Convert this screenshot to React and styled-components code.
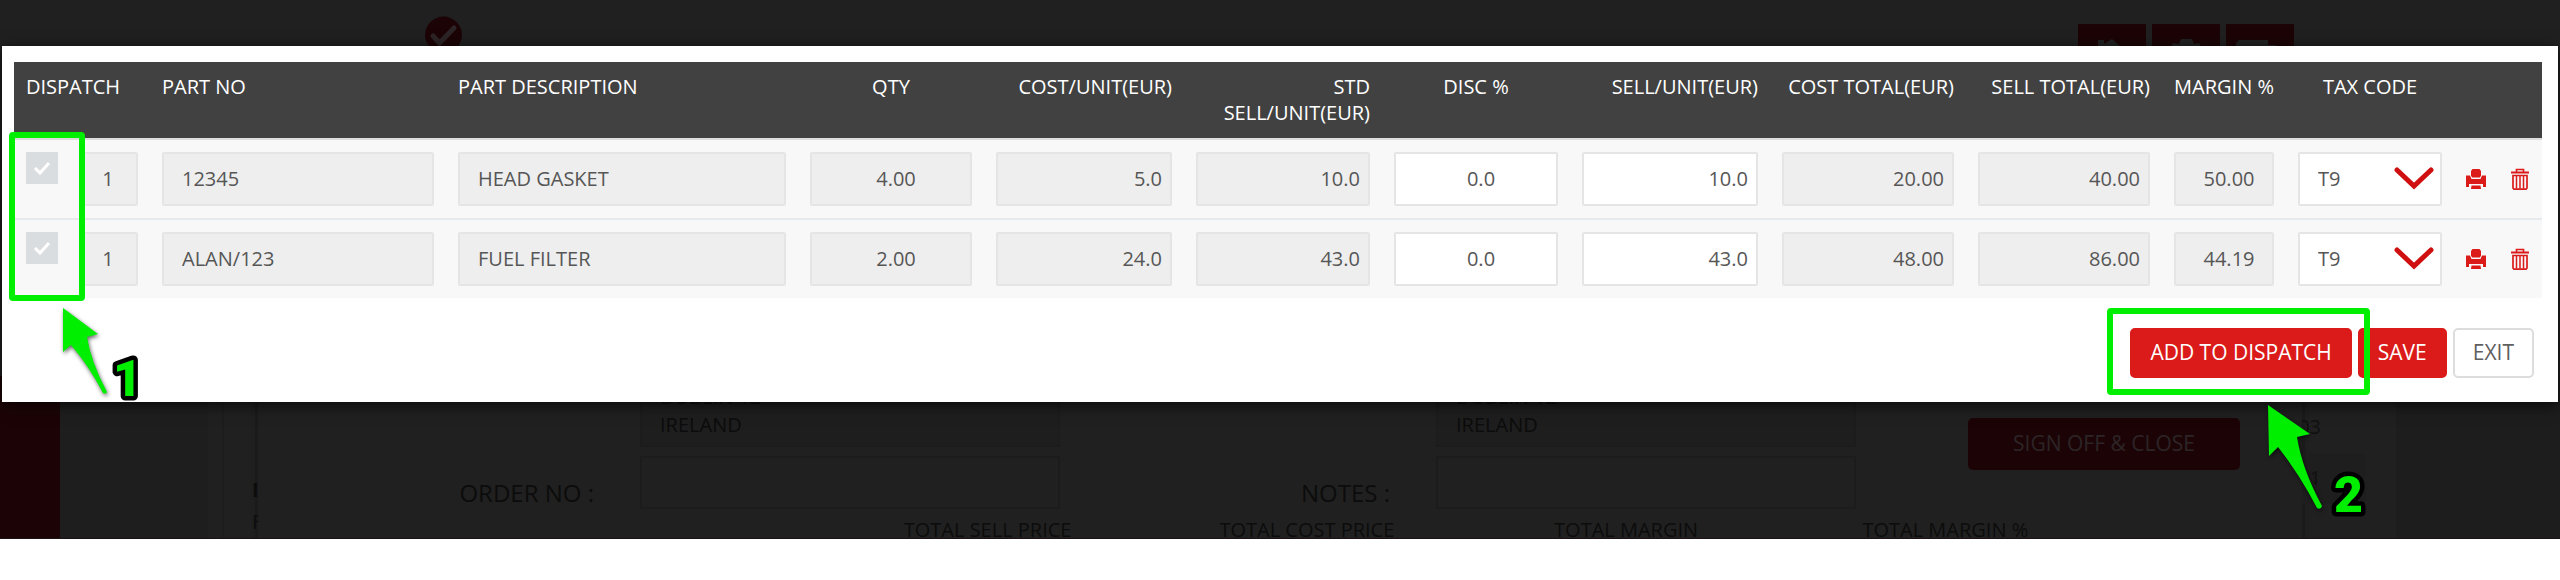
import React from "react";
import styled, { createGlobalStyle } from "styled-components";

const GlobalStyle = createGlobalStyle`
  *, *::before, *::after { box-sizing: border-box; }
  body {
    margin: 0;
    background: #fff;
    color: #565656;
    font-family: "Open Sans", "Noto Sans", sans-serif;
    font-size: 20px;
  }
  input, select, button { font: inherit; color: inherit; margin: 0; }
`;

/* ---------- page behind the dialog ---------- */

const Stage = styled.div`
  display: grid;
  grid-template-columns: minmax(0, 1fr);
  align-items: start;
`;

const Backdrop = styled.div`
  grid-area: 1 / 1;
  background: #202020;
  color: #0c0c0c;
  border-bottom: 1px solid #1c1214;
  overflow: hidden;
`;

const Masthead = styled.header`
  display: flex;
  justify-content: space-between;
  align-items: flex-start;
  min-height: 376px;
  padding: 16px 266px 0 425px;
`;

const Shortcuts = styled.nav`
  display: flex;
  gap: 6px;
  padding-top: 8px;
`;

const Shortcut = styled.a`
  display: flex;
  justify-content: center;
  width: 68px;
  height: 68px;
  padding-top: 14px;
  background: #1c0406;
`;

const PageBody = styled.div`
  display: grid;
  grid-template-columns: 60px 148px 14px 36px minmax(0, 1fr) 64px 30px 164px;
`;

const Strip = styled.div`
  background: ${(p) => p.$tone};
`;

const LeftCard = styled.div`
  display: flex;
  flex-direction: column;
  align-items: flex-end;
  padding-top: 98px;
  overflow: hidden;
  border-left: 2px solid #1d1d1d;
  box-shadow: inset -4px 0 4px -2px #181818;
`;

const Fragment = styled.span`
  width: 6px;
  overflow: hidden;
  line-height: 32px;
  font-weight: ${(p) => (p.$bold ? 700 : 400)};
`;

const RightCard = styled.div`
  color: #101010;
  overflow: hidden;
  box-shadow: inset 4px 0 4px -2px #181818;
`;

const AmountRow = styled.div`
  height: 51px;
  padding-top: 11px;
  background: ${(p) => (p.$striped ? "#1e1e1e" : "transparent")};

  &:first-child { margin-top: 26px; }
`;

const Amount = styled.div`
  width: 24px;
  margin-left: -5px;
  text-align: right;
`;

const Sheet = styled.main`
  min-width: 0;
`;

const Form = styled.div`
  display: grid;
  grid-template-columns: 382fr 420fr 376fr 420fr 446fr;
  grid-template-rows: 71px 53px;
  row-gap: 9px;
`;

const AddressBox = styled.address`
  grid-column: ${(p) => p.$column};
  padding: 7px 18px 0;
  border: 2px solid #1c1c1c;
  border-top: 0;
  background: #1e1e1e;
  font-style: normal;
  line-height: 28px;
`;

const FieldLabel = styled.label`
  grid-column: ${(p) => p.$column};
  grid-row: 2;
  align-self: end;
  padding-right: 46px;
  text-align: right;
  font-size: 24px;
  line-height: 32px;
`;

const DimInput = styled.input`
  grid-column: ${(p) => p.$column};
  grid-row: 2;
  width: 100%;
  border: 2px solid #1c1c1c;
  background: transparent;
`;

const SignOff = styled.button`
  grid-column: 5;
  grid-row: 1 / 3;
  width: 272px;
  height: 52px;
  margin: 42px 0 0 112px;
  padding-bottom: 3px;
  border: 0;
  border-radius: 5px;
  background: #1c0406;
  color: #2c2426;
  font-size: 21px;
`;

const Totals = styled.div`
  display: grid;
  grid-template-columns: repeat(4, 1fr);
  margin-top: 12px;
  padding: 0 197px 0 570px;
  text-align: center;
  line-height: 17px;
  white-space: nowrap;
`;

/* ---------- dialog ---------- */

const Dialog = styled.section`
  grid-area: 1 / 1;
  position: relative;
  margin: 46px 2px 0;
  padding: 16px 16px 24px 12px;
  background: #fff;
  box-shadow: 0 3px 14px rgba(0, 0, 0, 0.7);
`;

const PartsTable = styled.table`
  width: 100%;
  table-layout: fixed;
  border-spacing: 0;
  background: #f8f8f8;
`;

const HeadCell = styled.th`
  padding: 12px;
  vertical-align: top;
  border-bottom: 2px solid #ddd;
  background: #414141;
  color: #fff;
  font-weight: 400;
  line-height: 26px;
  text-align: ${(p) => p.$align || "left"};
`;

const Cell = styled.td`
  height: 78px;
  padding: 12px;
  vertical-align: top;

  tr + tr > & {
    height: 80px;
    border-top: 2px solid #e7eaec;
  }
`;

const Field = styled.input`
  display: block;
  width: 100%;
  height: 54px;
  padding: 0 8px 2px ${(p) => (p.$narrow ? "4px" : "18px")};
  border: 2px solid #e5e5e5;
  border-radius: 2px;
  background: ${(p) => (p.readOnly ? "#eee" : "#fff")};
  text-align: ${(p) => p.$align || "left"};
`;

const DispatchCell = styled.div`
  display: flex;
  align-items: flex-start;
  gap: 24px;
`;

const Tick = styled.label`
  display: grid;
  flex: none;
  width: 32px;
  height: 32px;

  > * { grid-area: 1 / 1; }

  input {
    appearance: none;
    width: 32px;
    height: 32px;
    background: #d9dde0;
  }

  svg {
    place-self: center;
    z-index: 1;
  }
`;

const SelectBox = styled.div`
  display: grid;
  align-items: center;

  > * { grid-area: 1 / 1; }

  svg {
    justify-self: end;
    margin-right: 8px;
    pointer-events: none;
  }
`;

const TaxSelect = styled.select`
  appearance: none;
  width: 100%;
  height: 54px;
  padding: 0 18px 2px;
  border: 2px solid #e5e5e5;
  border-radius: 2px;
  background: #fff;
`;

const RowActions = styled.div`
  display: flex;
  align-items: center;
  gap: 24px;
  height: 54px;
`;

const IconButton = styled.button`
  display: flex;
  padding: 0;
  border: 0;
  background: none;
  color: #db1a1a;
`;

const Footer = styled.footer`
  display: flex;
  justify-content: flex-end;
  gap: 6px;
  padding: 30px 8px 0 0;
`;

const Button = styled.button`
  height: 50px;
  padding: 0 18px 2px;
  border: 2px solid ${(p) => (p.$plain ? "#ddd" : "#db1a1a")};
  border-radius: 5px;
  background: ${(p) => (p.$plain ? "#fff" : "#db1a1a")};
  color: ${(p) => (p.$plain ? "#5f5f5f" : "#fff")};
  font-size: 21px;
  line-height: 28px;
`;

/* ---------- tutorial marks laid over the dialog ---------- */

const Highlight = styled.div`
  position: absolute;
  border: 6px solid #00ee00;
  border-radius: 4px;
  pointer-events: none;
`;

const DispatchHighlight = styled(Highlight)`
  left: 7px;
  top: 86px;
  width: 76px;
  height: 169px;
`;

const AddHighlight = styled(Highlight)`
  right: 188px;
  top: 262px;
  width: 263px;
  height: 87px;
`;

const Callout = styled.svg`
  position: absolute;
  overflow: visible;
  pointer-events: none;

  path {
    fill: #00ee00;
    filter: drop-shadow(1px 2px 2px rgba(0, 0, 0, 0.6));
  }

  text {
    fill: #00ee00;
    stroke: #000;
    stroke-width: 9px;
    stroke-linejoin: round;
    paint-order: stroke;
    font-family: Roboto, "Liberation Sans", sans-serif;
    font-weight: 900;
    font-size: 50px;
  }
`;

const FirstCallout = styled(Callout)`
  left: 61px;
  top: 262px;
`;

const SecondCallout = styled(Callout)`
  right: 190px;
  top: 359px;
`;

const CheckIcon = () => (
  <svg width="18" height="14" viewBox="0 0 18 14" fill="none" stroke="#fff" strokeWidth="3" aria-hidden="true">
    <path d="M2 7l5 5L16 2" />
  </svg>
);

const ChevronIcon = () => (
  <svg width="40" height="24" viewBox="0 0 40 24" fill="none" stroke="#d01010" strokeWidth="5" strokeLinecap="round" aria-hidden="true">
    <path d="M3 3l17 16L37 3" />
  </svg>
);

const PrinterIcon = () => (
  <svg width="20" height="20" viewBox="0 0 20 20" fill="currentColor" aria-hidden="true">
    <path d="M6.500 0h7l1.500 2v4.500L14 8.500H6L5 6.500V2z" />
    <path d="M0 6.500h4L5.500 10h9L16 6.500h4V18h-3v-3H3v3H0z" />
    <path d="M5.500 16.500h9L15 20H5z" />
  </svg>
);

const TrashIcon = () => (
  <svg width="20" height="22" viewBox="0 0 20 22" fill="none" stroke="currentColor" aria-hidden="true">
    <path d="M1 4.500h18" strokeWidth="2" />
    <path d="M6.500 4V1.500h7V4" strokeWidth="1.600" />
    <path d="M3 7.500h14v12.500l-1 1.200H4L3 20z" strokeWidth="1.700" />
    <path d="M6.500 8v12.500M10 8v12.500M13.500 8v12.500" strokeWidth="1.500" />
  </svg>
);

const COLUMNS = [
  { title: "DISPATCH", width: 136 },
  { title: "PART NO", width: 296, key: "partNo", locked: true },
  { title: "PART DESCRIPTION", width: 352, key: "description", locked: true },
  { title: "QTY", width: 186, key: "qty", align: "center", locked: true },
  { title: "COST/UNIT(EUR)", width: 200, key: "costUnit", align: "right", locked: true },
  { title: "STD SELL/UNIT(EUR)", width: 198, key: "stdSell", align: "right", locked: true },
  { title: "DISC %", width: 188, key: "discount", align: "center" },
  { title: "SELL/UNIT(EUR)", width: 200, key: "sellUnit", align: "right" },
  { title: "COST TOTAL(EUR)", width: 196, key: "costTotal", align: "right", locked: true },
  { title: "SELL TOTAL(EUR)", width: 196, key: "sellTotal", align: "right", locked: true },
  { title: "MARGIN %", width: 124, key: "margin", align: "center", locked: true },
  { title: "TAX CODE", width: 168, align: "center" },
  { title: "", width: 88 },
];

const PARTS = [
  { partNo: "12345", description: "HEAD GASKET", qty: "4.00", costUnit: "5.0", stdSell: "10.0", discount: "0.0", sellUnit: "10.0", costTotal: "20.00", sellTotal: "40.00", margin: "50.00" },
  { partNo: "ALAN/123", description: "FUEL FILTER", qty: "2.00", costUnit: "24.0", stdSell: "43.0", discount: "0.0", sellUnit: "43.0", costTotal: "48.00", sellTotal: "86.00", margin: "44.19" },
];

function PartRow({ part }) {
  return (
    <tr>
      <Cell>
        <DispatchCell>
          <Tick>
            <input type="checkbox" defaultChecked disabled aria-label={`Dispatch ${part.partNo}`} />
            <CheckIcon />
          </Tick>
          <Field defaultValue="1" readOnly $narrow $align="center" aria-label="Dispatch quantity" />
        </DispatchCell>
      </Cell>
      {COLUMNS.filter((c) => c.key).map((c) => (
        <Cell key={c.key}>
          <Field defaultValue={part[c.key]} readOnly={!!c.locked} $align={c.align} aria-label={c.title} />
        </Cell>
      ))}
      <Cell>
        <SelectBox>
          <TaxSelect aria-label="Tax code" defaultValue="T9">
            <option>T9</option>
          </TaxSelect>
          <ChevronIcon />
        </SelectBox>
      </Cell>
      <Cell>
        <RowActions>
          <IconButton type="button" aria-label="Print"><PrinterIcon /></IconButton>
          <IconButton type="button" aria-label="Delete"><TrashIcon /></IconButton>
        </RowActions>
      </Cell>
    </tr>
  );
}

function BackgroundPage() {
  return (
    <Backdrop>
      <Masthead>
        <svg width="37" height="38" viewBox="0 0 37 38" aria-hidden="true">
          <circle cx="18.500" cy="19" r="18.500" fill="#1c0406" />
          <path d="M8 20l6.500 7L29 12" fill="none" stroke="#2c2426" strokeWidth="5" strokeLinecap="round" />
        </svg>
        <Shortcuts>
          <Shortcut href="#home" aria-label="Home">
            <svg width="40" height="36" viewBox="0 0 40 36" fill="#222"><path d="M6 2h6v4l8-5 17 15h-5v18H8V16H3l3-3z" /></svg>
          </Shortcut>
          <Shortcut href="#settings" aria-label="Settings">
            <svg width="40" height="36" viewBox="0 0 40 36" fill="#222"><path d="M15 1h11l2 5 5-1 5 9-4 4 4 5-5 9-6-2H14l-6 2-5-9 4-5-4-4 4-9 6 1z" /></svg>
          </Shortcut>
          <Shortcut href="#deliveries" aria-label="Deliveries">
            <svg width="48" height="36" viewBox="0 0 48 36" fill="#222"><path d="M3 2h29v5h8l6 9v14H0V5z" /></svg>
          </Shortcut>
        </Shortcuts>
      </Masthead>
      <PageBody>
        <Strip $tone="#1c0406" />
        <Strip $tone="#1e1e1e" />
        <Strip $tone="#202020" />
        <LeftCard>
          <Fragment $bold>I</Fragment>
          <Fragment>F</Fragment>
        </LeftCard>
        <Sheet>
          <Form>
            <AddressBox $column={2}>DUBLIN 12<br />IRELAND</AddressBox>
            <AddressBox $column={4}>DUBLIN 12<br />IRELAND</AddressBox>
            <SignOff type="button">SIGN OFF &amp; CLOSE</SignOff>
            <FieldLabel htmlFor="order-no" $column={1}>ORDER NO :</FieldLabel>
            <DimInput id="order-no" $column={2} />
            <FieldLabel htmlFor="notes" $column={3}>NOTES :</FieldLabel>
            <DimInput id="notes" $column={4} />
          </Form>
          <Totals>
            <span>TOTAL SELL PRICE</span>
            <span>TOTAL COST PRICE</span>
            <span>TOTAL MARGIN</span>
            <span>TOTAL MARGIN %</span>
          </Totals>
        </Sheet>
        <RightCard>
          <AmountRow><Amount>03</Amount></AmountRow>
          <AmountRow $striped><Amount>1</Amount></AmountRow>
        </RightCard>
        <Strip $tone="#202020" />
        <Strip $tone="#1d1d1d" />
      </PageBody>
    </Backdrop>
  );
}

export default function App() {
  return (
    <Stage>
      <GlobalStyle />
      <BackgroundPage />
      <Dialog role="dialog" aria-label="Dispatch parts">
        <PartsTable>
          <colgroup>
            {COLUMNS.map((c) => <col key={c.title} width={c.width} />)}
          </colgroup>
          <thead>
            <tr>
              {COLUMNS.map((c) => <HeadCell key={c.title} scope="col" $align={c.align}>{c.title}</HeadCell>)}
            </tr>
          </thead>
          <tbody>
            {PARTS.map((part) => <PartRow key={part.partNo} part={part} />)}
          </tbody>
        </PartsTable>
        <Footer>
          <Button type="button">ADD TO DISPATCH</Button>
          <Button type="button">SAVE</Button>
          <Button type="button" $plain>EXIT</Button>
        </Footer>
        <DispatchHighlight />
        <AddHighlight />
        <FirstCallout width="80" height="96" viewBox="0 0 80 96">
          <path d="M0 0L35 26L24 29Q28 54 44 84Q43 87 40 85Q26 58 8 37L0 44Z" />
          <text x="50" y="88">1</text>
        </FirstCallout>
        <SecondCallout width="100" height="120" viewBox="0 0 100 120">
          <path d="M0 0L42 29L29 32Q34 64 54 101Q53 105 49 103Q32 70 10 42L1 51Z" />
          <text x="66" y="107">2</text>
        </SecondCallout>
      </Dialog>
    </Stage>
  );
}
